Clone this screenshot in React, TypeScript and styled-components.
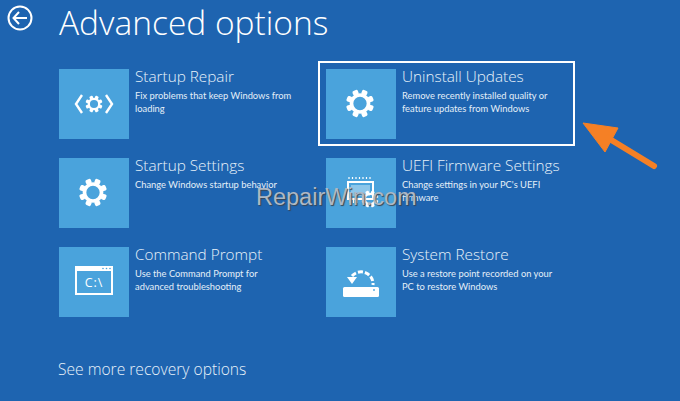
import React from 'react'
import styled, { createGlobalStyle } from 'styled-components'

const GlobalStyle = createGlobalStyle`
  html, body {
    margin: 0;
    padding: 0;
    background: #1e64b0;
  }
`

const Screen = styled.div`
  position: relative;
  width: 680px;
  height: 401px;
  overflow: hidden;
  background: #1e64b0;
  color: #ffffff;
  font-family: "Open Sans", "Liberation Sans", sans-serif;
`

const Header = styled.div`
  display: flex;
  align-items: center;
  height: 44px;
  padding: 0 0 25px 7px;
`

const BackIcon = styled.svg`
  width: 26px;
  height: 26px;
  margin: 0 26px 8px 0;
  flex: none;
`

const Title = styled.h1`
  margin: 0;
  font-size: 33.5px;
  line-height: 44px;
  font-weight: 300;
  white-space: nowrap;
`

const Grid = styled.div`
  display: grid;
  grid-template-columns: 267px 254px;
  grid-auto-rows: 70px;
  row-gap: 19px;
  padding-left: 59px;
`

const Option = styled.div<{ $selected?: boolean }>`
  position: relative;
  display: flex;
  gap: 6px;

  ${({ $selected }) =>
    $selected &&
    `&::after {
      content: "";
      position: absolute;
      left: -8px;
      top: -8px;
      width: 253px;
      height: 81px;
      border: 2px solid #ffffff;
    }`}
`

const Tile = styled.div`
  display: flex;
  align-items: center;
  justify-content: center;
  width: 70px;
  height: 70px;
  flex: none;
  background: #4aa3dc;
`

const TileIcon = styled.svg`
  width: 70px;
  height: 70px;
  display: block;
`

const OptionText = styled.div`
  display: flex;
  flex-direction: column;
  min-width: 0;
`

const OptionTitle = styled.div`
  font-size: 15.3px;
  line-height: 15px;
  font-weight: 300;
  color: #e8f2fa;
  white-space: nowrap;
`

const OptionDesc = styled.div`
  margin-top: 5px;
  font-family: "Lato", "Open Sans", sans-serif;
  font-size: 9.35px;
  line-height: 13px;
  color: #e4eff8;
`

const MoreLink = styled.div`
  margin: 42px 0 0 58px;
  font-size: 15.6px;
  line-height: 20px;
  font-weight: 300;
  color: #e8f2fa;
`

const Watermark = styled.div`
  position: absolute;
  left: 256px;
  top: 184px;
  font-family: "Liberation Sans", Arial, sans-serif;
  font-size: 23.5px;
  line-height: 26px;
  color: #aeb8c4;
  text-shadow: 1px 1px 1px #3a4652;
`

const Arrow = styled.svg`
  position: absolute;
  left: 580px;
  top: 118px;
  width: 80px;
  height: 60px;
`

const Gear = ({ cx, cy, r = 11.5 }: { cx: number; cy: number; r?: number }) => (
  <g>
    <circle cx={cx} cy={cy} r={r * 0.74} fill="none" stroke="#fff" strokeWidth={r * 0.32} />
    {[0, 45, 90, 135, 180, 225, 270, 315].map((a) => (
      <rect
        key={a}
        x={cx - r * 0.25}
        y={cy - r * 1.22}
        width={r * 0.5}
        height={r * 0.44}
        rx={r * 0.14}
        fill="#fff"
        transform={`rotate(${a + 22.5} ${cx} ${cy})`}
      />
    ))}
  </g>
)

const RepairIcon = () => (
  <TileIcon viewBox="0 0 70 70">
    <Gear cx={35} cy={35} r={7} />
    <path d="M23 26 L17 35 L23 44 M47 26 L53 35 L47 44" fill="none" stroke="#fff" strokeWidth="2.4" />
  </TileIcon>
)

const GearIcon = () => (
  <TileIcon viewBox="0 0 70 70">
    <Gear cx={34} cy={34.5} />
  </TileIcon>
)

const CommandIcon = () => (
  <TileIcon viewBox="0 0 70 70">
    <rect x="16" y="19" width="38" height="29" fill="#fff" />
    <rect x="18" y="24" width="34" height="22" fill="#4aa3dc" />
    <circle cx="44" cy="21.5" r="0.8" fill="#4aa3dc" />
    <circle cx="47.5" cy="21.5" r="0.8" fill="#4aa3dc" />
    <circle cx="51" cy="21.5" r="0.8" fill="#4aa3dc" />
    <text x="35" y="40" textAnchor="middle" fontSize="12.5" fill="#fff" fontFamily="Open Sans, sans-serif" letterSpacing="1">
      C:\
    </text>
  </TileIcon>
)

const FirmwareIcon = () => (
  <TileIcon viewBox="0 0 70 70">
    <path d="M23 19v2M26.5 19v2M30 19v2M33.5 19v2M37 19v2M40.5 19v2M44 19v2" stroke="#fff" strokeWidth="1.2" />
    <rect x="22" y="24" width="25" height="17" fill="none" stroke="#fff" strokeWidth="2" />
    <rect x="25" y="27" width="19" height="11" fill="#8cc6ea" />
    <path d="M24 42v3M27.5 42v3M31 42v3" stroke="#fff" strokeWidth="1.2" />
    <Gear cx={44} cy={41} r={7} />
  </TileIcon>
)

const RestoreIcon = () => (
  <TileIcon viewBox="0 0 70 70">
    <rect x="17" y="40" width="36" height="10" rx="1.5" fill="#fff" />
    <circle cx="48" cy="43" r="0.9" fill="#4aa3dc" />
    <path
      d="M26 29 A12 12 0 0 1 47 38"
      fill="none"
      stroke="#fff"
      strokeWidth="3"
      strokeDasharray="5 2"
    />
    <path d="M21 30 L31 30 L26 37 Z" fill="#fff" />
  </TileIcon>
)

const options = [
  {
    title: 'Startup Repair',
    desc: ['Fix problems that keep Windows from', 'loading'],
    icon: <RepairIcon />,
  },
  {
    title: 'Uninstall Updates',
    desc: ['Remove recently installed quality or', 'feature updates from Windows'],
    icon: <GearIcon />,
    selected: true,
  },
  {
    title: 'Startup Settings',
    desc: ['Change Windows startup behavior'],
    icon: <GearIcon />,
  },
  {
    title: 'UEFI Firmware Settings',
    desc: ["Change settings in your PC's UEFI", 'firmware'],
    icon: <FirmwareIcon />,
  },
  {
    title: 'Command Prompt',
    desc: ['Use the Command Prompt for', 'advanced troubleshooting'],
    icon: <CommandIcon />,
  },
  {
    title: 'System Restore',
    desc: ['Use a restore point recorded on your', 'PC to restore Windows'],
    icon: <RestoreIcon />,
  },
]

export default function App() {
  return (
    <Screen>
      <GlobalStyle />
      <Header>
        <BackIcon viewBox="0 0 26 26">
          <circle cx="13" cy="13" r="11.5" fill="none" stroke="#fff" strokeWidth="2" />
          <path d="M12 7 L6.5 13 L12 19 M7 13 H20" fill="none" stroke="#fff" strokeWidth="2" />
        </BackIcon>
        <Title>Advanced options</Title>
      </Header>
      <Grid>
        {options.map((o) => (
          <Option key={o.title} $selected={o.selected}>
            <Tile>{o.icon}</Tile>
            <OptionText>
              <OptionTitle>{o.title}</OptionTitle>
              <OptionDesc>
                {o.desc.map((line) => (
                  <div key={line}>{line}</div>
                ))}
              </OptionDesc>
            </OptionText>
          </Option>
        ))}
      </Grid>
      <MoreLink>See more recovery options</MoreLink>
      <Arrow viewBox="0 0 80 60">
        <path d="M3 5 L38 10 L25 34 Z" fill="#f58025" stroke="#f58025" strokeLinejoin="round" />
        <path d="M28 20 L74 48" stroke="#f58025" strokeWidth="6" strokeLinecap="round" />
      </Arrow>
      <Watermark>RepairWin.com</Watermark>
    </Screen>
  )
}
